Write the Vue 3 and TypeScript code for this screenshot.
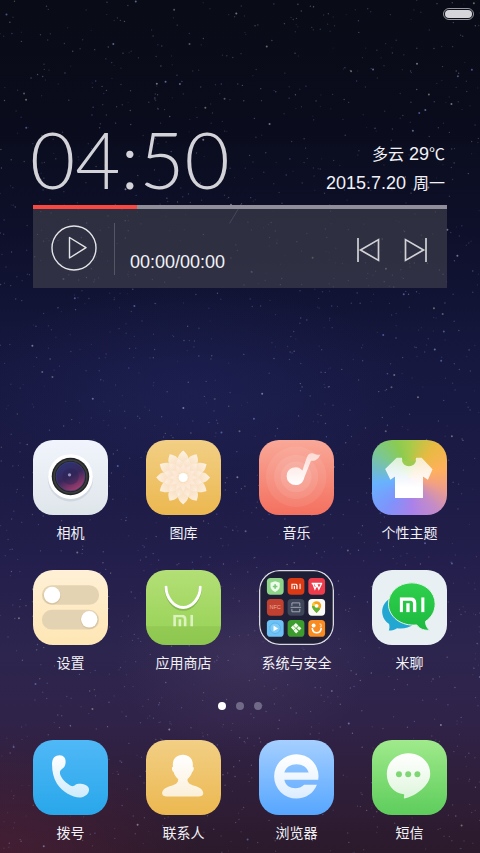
<script setup lang="ts">
import { ref } from 'vue'

interface AppItem {
  id: string
  name: string
}

interface Star {
  x: string
  y: string
  r: number
  fill: string
  opacity: number
}

const apps: AppItem[] = [
  { id: 'camera', name: '相机' },
  { id: 'gallery', name: '图库' },
  { id: 'music', name: '音乐' },
  { id: 'theme', name: '个性主题' },
  { id: 'settings', name: '设置' },
  { id: 'store', name: '应用商店' },
  { id: 'folder', name: '系统与安全' },
  { id: 'talk', name: '米聊' },
]

const dock: AppItem[] = [
  { id: 'phone', name: '拨号' },
  { id: 'contacts', name: '联系人' },
  { id: 'browser', name: '浏览器' },
  { id: 'sms', name: '短信' },
]

const sections = [
  { key: 'apps', items: apps },
  { key: 'dock', items: dock },
]

const pages = [0, 1, 2]
const page = ref(0)
const progress = ref(25)
const petals = Array.from({ length: 12 }, (_, i) => i * 30)

/* Small seeded generator so the sky is the same on every load. */
function makeRandom(seed: number): () => number {
  let a = seed
  return () => {
    a = (a + 0x6d2b79f5) | 0
    let t = Math.imul(a ^ (a >>> 15), 1 | a)
    t = (t + Math.imul(t ^ (t >>> 7), 61 | t)) ^ t
    return ((t ^ (t >>> 14)) >>> 0) / 4294967296
  }
}

function makeStars(count: number): Star[] {
  const rnd = makeRandom(2015)
  const tints = ['#8fa4dc', '#b9b6c8', '#a9a595', '#6f86d6', '#8c8a92']
  return Array.from({ length: count }, () => {
    const bright = rnd() > 0.95
    return {
      x: (rnd() * 100).toFixed(2) + '%',
      y: (rnd() * 100).toFixed(2) + '%',
      r: bright ? 1 : 0.7,
      fill: tints[Math.floor(rnd() * tints.length)],
      opacity: bright ? 0.6 : 0.12 + rnd() * 0.33,
    }
  })
}

const stars = makeStars(1800)
</script>

<template>
  <main class="home">
    <svg class="sky" aria-hidden="true">
      <circle v-for="(s, i) in stars" :key="i" :cx="s.x" :cy="s.y" :r="s.r" :fill="s.fill" :opacity="s.opacity" />
      <line x1="50.4%" y1="23.8%" x2="47.8%" y2="26.2%" stroke="#7d86b4" stroke-opacity="0.45" />
    </svg>

    <svg class="defs" aria-hidden="true">
      <defs>
        <linearGradient id="fade" x1="0" y1="0" x2="0" y2="1">
          <stop offset="0" stop-color="#fff" />
          <stop offset="1" stop-color="#fff" stop-opacity="0.76" />
        </linearGradient>
        <linearGradient id="fade-up" x1="0" y1="0" x2="0" y2="1">
          <stop offset="0" stop-color="#fff" stop-opacity="0.72" />
          <stop offset="0.75" stop-color="#fff" />
        </linearGradient>
        <linearGradient id="note" x1="0" y1="0" x2="0" y2="1">
          <stop offset="0" stop-color="#fff" stop-opacity="0.6" />
          <stop offset="1" stop-color="#fff" />
        </linearGradient>
        <linearGradient id="lens" x1="0.2" y1="0" x2="0.75" y2="1">
          <stop offset="0" stop-color="#2b3474" />
          <stop offset="0.5" stop-color="#38285c" />
          <stop offset="1" stop-color="#b04070" />
        </linearGradient>
        <linearGradient id="petal" x1="0" y1="0" x2="0" y2="1">
          <stop offset="0" stop-color="#fff7ef" />
          <stop offset="1" stop-color="#f6d4b4" />
        </linearGradient>
        <linearGradient id="bubble" x1="0" y1="0" x2="0" y2="1">
          <stop offset="0" stop-color="#2fd04c" />
          <stop offset="1" stop-color="#1cba40" />
        </linearGradient>
        <symbol id="mi" viewBox="0 0 60 36">
          <path d="M4 36V4H26Q36 4 36 14V36M20 14V36M56 0V36" fill="none" stroke="currentColor" stroke-width="8" />
        </symbol>
      </defs>
    </svg>

    <header class="status">
      <span class="battery" role="img" aria-label="电量"><span class="charge"></span></span>
    </header>

    <section class="widget">
      <div class="info">
        <time class="clock" datetime="04:50">04:50</time>
        <div class="meta">
          <p><span class="han">多云</span> 29<span class="han">℃</span></p>
          <p>2015.7.20 <span class="han day">周一</span></p>
        </div>
      </div>
      <div class="track" role="progressbar" aria-valuemin="0" aria-valuemax="100" :aria-valuenow="progress">
        <div class="played" :style="{ width: progress + '%' }"></div>
      </div>
      <div class="player">
        <button class="control" type="button" aria-label="播放">
          <svg width="46" height="46" viewBox="0 0 46 46" fill="none" stroke="#e4e4e8" stroke-width="1.4">
            <circle cx="23" cy="22" r="22" />
            <path d="M18.5 11.5L35 21.7L18.5 32Z" stroke-linejoin="round" />
          </svg>
        </button>
        <div class="elapsed">00:00/00:00</div>
        <div class="skips">
          <button class="control" type="button" aria-label="上一首">
            <svg width="23" height="24" viewBox="0 0 23 24" fill="none" stroke="#d2d2d6" stroke-width="1.7">
              <path d="M1 1V25M21.5 2.6V23.4L3.5 13Z" />
            </svg>
          </button>
          <button class="control" type="button" aria-label="下一首">
            <svg width="23" height="24" viewBox="0 0 23 24" fill="none" stroke="#d2d2d6" stroke-width="1.7">
              <path d="M22 1V25M1.500 2.600V23.400L19.500 13Z" />
            </svg>
          </button>
        </div>
      </div>
    </section>

    <template v-for="section in sections" :key="section.key">
      <nav v-if="section.key === 'dock'" class="pager" aria-label="页面">
        <button
          v-for="p in pages"
          :key="p"
          type="button"
          class="dot"
          :class="{ current: p === page }"
          :aria-label="'第' + (p + 1) + '页'"
          @click="page = p"
        ></button>
      </nav>
      <section class="grid" :class="section.key">
        <button v-for="item in section.items" :key="item.id" class="app" type="button">
          <svg class="tile" :class="item.id" viewBox="0 0 228 228" aria-hidden="true">
            <g v-if="item.id === 'camera'">
              <circle cx="114" cy="118" r="69" fill="#9aa3b0" opacity="0.25" />
              <circle cx="114" cy="111" r="68" fill="#fff" />
              <circle cx="114" cy="111" r="57" fill="#222324" />
              <circle cx="114" cy="111" r="50" fill="none" stroke="#3b3c3c" stroke-width="5" />
              <circle cx="114" cy="111" r="44" fill="url(#lens)" stroke="#3b4187" stroke-width="2" />
              <circle cx="114" cy="111" r="25" fill="#282456" opacity="0.4" />
              <circle cx="111" cy="106" r="5" fill="#8f93bb" />
            </g>

            <g v-else-if="item.id === 'gallery'" transform="translate(113 114)">
              <g v-for="a in petals" :key="'o' + a" :transform="`rotate(${a})`">
                <path d="M0 -82C7 -75 17 -68 16 -54C15 -38 8 -24 0 -14C-8 -24 -15 -38 -16 -54C-17 -68 -7 -75 0 -82Z" fill="url(#petal)" opacity="0.88" />
              </g>
              <g v-for="a in petals" :key="'m' + a" :transform="`rotate(${a + 15})`">
                <path d="M0 -58C7 -53 13 -46 12 -37C11 -25 6 -16 0 -8C-6 -16 -11 -25 -12 -37C-13 -46 -7 -53 0 -58Z" fill="url(#petal)" opacity="0.5" />
              </g>
              <g v-for="a in petals" :key="'i' + a" :transform="`rotate(${a})`">
                <path d="M0 -40C9 -32 11 -24 0 -8C-11 -24 -9 -32 0 -40Z" fill="#fff1e6" opacity="0.5" />
              </g>
              <circle r="14" fill="#fff" />
            </g>

            <g v-else-if="item.id === 'music'">
              <circle cx="113" cy="112" r="92" fill="#fff" opacity="0.08" />
              <circle cx="113" cy="112" r="67" fill="#fff" opacity="0.09" />
              <circle cx="113" cy="112" r="47" fill="#fff" opacity="0.1" />
              <path
                d="M84 110A27 27 0 0 1 132 93L145 54C149 42 158 38 167 42C174 45 180 46 187 44C181 57 172 65 158 63L138 113C134 130 125 137 111 137A27 27 0 0 1 84 110Z"
                fill="url(#note)"
              />
            </g>

            <g v-else-if="item.id === 'theme'">
              <path
                d="M75 54H91C93 86 132 86 134 54H151L184 89L170 121L155 111V176H70V111L56 121L40 88Z"
                fill="url(#fade-up)"
              />
              <path d="M91 61C97 65 128 65 134 61C131 86 94 86 91 61Z" fill="#9ecb51" />
            </g>

            <g v-else-if="item.id === 'settings'">
              <rect x="27" y="46" width="174" height="60" rx="30" fill="#e4d3b3" />
              <rect x="27" y="121" width="174" height="60" rx="30" fill="#e4d3b3" />
              <circle cx="58" cy="78" r="27" fill="#c9b48c" opacity="0.5" />
              <circle cx="171" cy="152" r="27" fill="#c9b48c" opacity="0.5" />
              <circle cx="58" cy="76" r="25" fill="#fff" />
              <circle cx="171" cy="150" r="25" fill="#fff" />
            </g>

            <g v-else-if="item.id === 'store'">
              <rect y="171" width="228" height="57" fill="#76ad3e" opacity="0.25" />
              <path d="M61 54C61 86 84 119 113 119S165 86 165 54" fill="none" stroke="#6a9c38" stroke-width="10" stroke-linecap="round" opacity="0.5" />
              <path d="M61 52C61 83 84 114 113 114S165 83 165 52" fill="none" stroke="#fff" stroke-width="9" stroke-linecap="round" />
              <use href="#mi" x="82" y="136" width="62" height="36" color="#dcf3c0" />
            </g>

            <g v-else-if="item.id === 'folder'">
              <rect x="2" y="2" width="224" height="224" rx="60" fill="#1d1e33" fill-opacity="0.86" stroke="#d8d8e0" stroke-width="4" />
              <g transform="translate(24 24)">
                <rect width="51" height="51" rx="11" fill="#8ed58a" />
                <path d="M25 10L39 15V25C39 35 32 40 25 43C18 40 11 35 11 25V15Z" fill="#effbea" />
                <path d="M25 19V33M18 26H32" stroke="#79ca78" stroke-width="5" />
              </g>
              <g transform="translate(87 24)">
                <rect width="51" height="51" rx="11" fill="#dc3a14" />
                <use href="#mi" x="11" y="17" width="29" height="18" color="#fff" />
              </g>
              <g transform="translate(150 24)">
                <rect width="51" height="51" rx="11" fill="#ed3d4c" />
                <path d="M10 17H42M14 18L20 34L26 20L32 34L40 18M20 18L25 29" fill="none" stroke="#fff" stroke-width="4" />
              </g>
              <g transform="translate(24 88)">
                <rect width="51" height="51" rx="11" fill="#c0412f" />
                <text x="25" y="32" class="nfc">NFC</text>
              </g>
              <g transform="translate(87 88)">
                <rect width="51" height="51" rx="11" fill="#3f4659" />
                <path d="M13 21V12H37V21M13 30V39H37V30M9 25.500H41" fill="none" stroke="#b4b9c6" stroke-width="2.500" />
              </g>
              <g transform="translate(150 88)">
                <rect width="51" height="51" rx="11" fill="#fafaf6" />
                <path d="M25 43C18 35 11 30 11 21A14 14 0 0 1 39 21C39 30 32 35 25 43Z" fill="#f9a11b" />
                <path d="M25 43C18 35 11 30 11 21L25 24L36 30C33 35 29 38 25 43Z" fill="#5fb435" />
                <path d="M11 21A14 14 0 0 1 17 10L25 21Z" fill="#f4cf2c" />
                <circle cx="25" cy="21" r="6" fill="#fff" />
              </g>
              <g transform="translate(24 152)">
                <rect width="51" height="51" rx="11" fill="#6cc2f5" />
                <circle cx="25" cy="25" r="16" fill="#7fcaf6" stroke="#4dabe6" stroke-width="2" />
                <path d="M20 17L34 25.500L20 34Z" fill="#fff" />
              </g>
              <g transform="translate(87 152)">
                <rect width="51" height="51" rx="11" fill="#3c9c2d" />
                <path d="M25 9L33 17L25 25L17 17ZM10 23L16 17L24 25L18 31ZM28 25L34 18L42 25L36 32ZM18 33L25 26L33 34L26 41Z" fill="#f2faee" />
                <path d="M17 17L33 33" stroke="#7abf63" stroke-width="2" />
              </g>
              <g transform="translate(150 152)">
                <rect width="51" height="51" rx="11" fill="#f88b22" />
                <path d="M12 26C15 43 36 43 39 26" fill="none" stroke="#fff" stroke-width="5" stroke-linecap="round" />
                <circle cx="16" cy="17" r="6" fill="#fff" />
                <path d="M34 12C41 12 41 21 35 21" fill="none" stroke="#ffd5a6" stroke-width="4" />
              </g>
            </g>

            <g v-else-if="item.id === 'talk'" transform="translate(-396 -30)">
              <path d="M452 116C432 128 424 146 428 166C430 178 438 188 448 194C450 202 449 209 447 214C458 214 466 211 472 207C490 210 508 206 522 196Z" fill="#22a7d2" />
              <path
                d="M517 69C557 69 588 97 588 133C588 155 577 174 559 186C558 196 563 206 571 213C556 214 542 211 532 197C486 202 446 173 446 133C446 97 477 69 517 69Z"
                fill="url(#bubble)"
                stroke="#eaf3ee"
                stroke-width="3"
              />
              <use href="#mi" x="480" y="113" width="76" height="46" color="#fff" />
            </g>

            <path
              v-else-if="item.id === 'phone'"
              transform="translate(-39 -29)"
              d="M97 105C96 84 106 75 120 75C134 76 139 84 138 98C137 112 130 114 123 121C116 130 126 152 152 167C160 171 162 170 168 165C177 159 202 162 208 174C213 186 203 200 188 203C165 207 131 190 112 162C101 144 97 124 97 105Z"
              fill="url(#fade)"
            />

            <path
              v-else-if="item.id === 'contacts'"
              transform="translate(-378 -29)"
              d="M460 110C457 88 470 74 490 74C510 74 523 88 520 110C525 110 524 124 518 126C516 136 510 142 504 148C504 158 510 163 525 168C540 172 553 180 552 192C551 199 546 201 538 201H441C433 201 428 199 427 192C426 180 440 172 455 168C470 163 476 158 476 148C470 142 464 136 462 126C456 124 455 110 460 110Z"
              fill="url(#fade)"
            />

            <path
              v-else-if="item.id === 'browser'"
              transform="translate(-57 -29)"
              fill-rule="evenodd"
              d="M237 150H134C139 179 177 183 194 165H233C223 191 199 207 171 207A67.500 67.500 0 1 1 238 139ZM134 128H208C200 94 142 94 134 128Z"
              fill="url(#fade)"
            />

            <g v-else transform="translate(-396 -29)">
              <path d="M507 69C544 69 573 96 573 132C573 166 531 198 494 207C491 202 496 198 493 194C462 190 441 165 441 132C441 96 470 69 507 69Z" fill="url(#fade)" />
              <circle cx="478" cy="133" r="9" fill="#7fd675" />
              <circle cx="506" cy="133" r="9" fill="#7fd675" />
              <circle cx="534" cy="133" r="9" fill="#7fd675" />
            </g>
          </svg>
          <span class="label">{{ item.name }}</span>
        </button>
      </section>
    </template>
  </main>
</template>

<style>
body {
  margin: 0;
  background: #0a0c1a;
}
</style>

<style scoped>
.home {
  position: relative;
  box-sizing: border-box;
  min-height: 100vh;
  display: flex;
  flex-direction: column;
  padding: 8px 33px 10px;
  overflow: hidden;
  color: #f2f2f6;
  font-family: "Liberation Sans", "Noto Sans CJK SC", sans-serif;
  background:
    radial-gradient(ellipse 130px 100px at 51% 77%, rgba(96, 76, 112, 0.28), transparent),
    radial-gradient(ellipse 220px 110px at 40% 46%, rgba(44, 50, 120, 0.25), transparent),
    radial-gradient(ellipse 200px 130px at 0% 101%, rgba(94, 34, 58, 0.5), transparent),
    linear-gradient(180deg, #090b16 0%, #0a0c1d 15%, #0f112e 30%, #161840 43%, #1c1b46 56%, #241f4c 67%, #2c254e 76%, #30234a 84%, #2f1e38 93%, #2b1a2b 100%);
}

.sky {
  position: absolute;
  inset: 0;
  width: 100%;
  height: 100%;
}

.defs {
  position: absolute;
  width: 0;
  height: 0;
}

.status {
  position: relative;
  display: flex;
  justify-content: flex-end;
  margin-right: -27px;
}

.battery {
  box-sizing: border-box;
  width: 31px;
  height: 12px;
  padding: 1px;
  border: 1px solid #9698a0;
  border-radius: 6px;
}

.charge {
  display: block;
  height: 8px;
  border-radius: 4px;
  background: #d6d6da;
}

.widget {
  position: relative;
  margin-top: 104px;
}

.info {
  display: flex;
  justify-content: space-between;
  align-items: flex-end;
  height: 81px;
}

.clock {
  margin-left: -3px;
  padding-bottom: 4px;
  font-family: Lato, "Liberation Sans", sans-serif;
  font-size: 78px;
  font-weight: 300;
  line-height: 84px;
  color: #d2d2d8;
}

.meta {
  padding: 0 2px 8px 0;
  text-align: right;
  font-size: 18px;
  line-height: 28px;
}

.meta p {
  margin: 0;
}

.han {
  font-family: "Noto Sans CJK SC", sans-serif;
  font-size: 16px;
}

.day {
  margin-left: 2px;
}

.track {
  height: 4px;
  background: #8f8e99;
}

.played {
  height: 100%;
  background: #fa4740;
}

.player {
  display: flex;
  align-items: center;
  height: 79px;
  padding: 0 20px 0 18px;
  background: rgba(72, 72, 82, 0.55);
}

.control {
  display: block;
  padding: 0;
  border: 0;
  background: none;
}

.control svg {
  display: block;
  overflow: visible;
}

.elapsed {
  box-sizing: border-box;
  height: 52px;
  margin-left: 17px;
  padding: 28px 0 0 15px;
  border-left: 1px solid #565663;
  font-size: 18px;
  line-height: 22px;
}

.skips {
  display: flex;
  gap: 24px;
  margin-left: auto;
}

.grid {
  position: relative;
  display: grid;
  grid-template-columns: repeat(4, 75px);
  justify-content: space-between;
  row-gap: 27px;
}

.apps {
  margin-top: auto;
}

.app {
  display: flex;
  flex-direction: column;
  align-items: center;
  gap: 6px;
  padding: 0;
  border: 0;
  background: none;
  color: inherit;
  font: inherit;
}

.tile {
  display: block;
  width: 75px;
  height: 75px;
  border-radius: 20px;
}

.label {
  font-family: "Noto Sans CJK SC", sans-serif;
  font-size: 14px;
  line-height: 22px;
  white-space: nowrap;
}

.camera { background: linear-gradient(#f1f4fc, #dfe6ea); }
.gallery { background: linear-gradient(#f2cf85, #ecb850); }
.music { background: linear-gradient(#f9a898, #f4705f); }
.theme { background: conic-gradient(#a5cb4a, #e8ba42 38deg, #ffb05c 75deg, #f2a083 105deg, #c38bc8 140deg, #a981ea 175deg, #7f93fb 215deg, #68b2ff 260deg, #7cc88c 310deg, #8bcb51 340deg, #a5cb4a); }
.settings { background: linear-gradient(#fff0d6, #fee6b4); }
.store { background: linear-gradient(#b3df76, #95d154); }
.talk { background: #e9f0f4; }
.phone { background: linear-gradient(#50b8f7, #28a7ea); }
.contacts { background: linear-gradient(#f2cf85, #ecb850); }
.browser { background: linear-gradient(#a5cfff, #56a6ff); }
.sms { background: linear-gradient(#a0ea8b, #5dcd5c); }

.nfc {
  fill: #eba99f;
  font-family: "Liberation Sans", sans-serif;
  font-size: 17px;
  text-anchor: middle;
}

.pager {
  position: relative;
  display: flex;
  justify-content: center;
  gap: 10px;
  padding: 29px 0 30px;
}

.dot {
  width: 8px;
  height: 8px;
  padding: 0;
  border: 0;
  border-radius: 50%;
  background: #716a87;
}

.dot.current {
  background: #fff;
}
</style>
